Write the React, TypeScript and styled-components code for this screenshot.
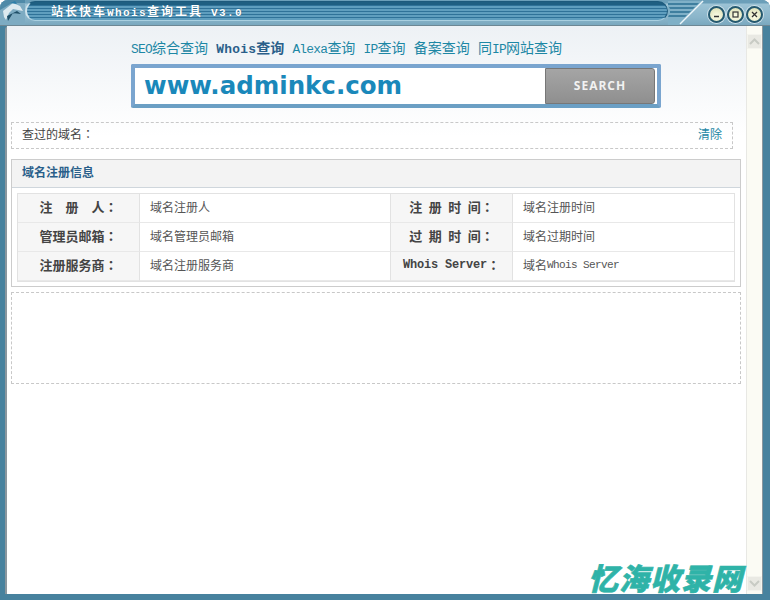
import { Fragment, type ReactNode } from "react";
import styled, { createGlobalStyle } from "styled-components";

const GlobalStyle = createGlobalStyle`
  html, body {
    margin: 0;
    padding: 0;
    background: #ffffff;
  }
`;

const cjk = `"Liberation Mono", "Noto Sans CJK SC", monospace`;

const Window = styled.div`
  width: 770px;
  height: 600px;
  overflow: hidden;
  position: relative;
  display: flex;
  flex-direction: column;
  background: #47829e;
  border-radius: 8px 8px 0 0;
  font-family: ${cjk};
`;

// the original bitmap font has tall, narrow latin: half the cjk width at nearly full height
const Latin = styled.span<{ $extra?: string }>`
  font-size: 0.92em;
  word-spacing: 0;
  letter-spacing: calc(-0.0565em + ${({ $extra }) => $extra ?? "0px"});
`;

// traditional chinese fonts centre the full width colon, like the original
const Colon = styled.span`
  font-family: "Noto Sans CJK TC", sans-serif;
`;

const TitleBar = styled.div`
  height: 26px;
  flex: none;
  display: flex;
  align-items: flex-start;
  background: linear-gradient(#6b9fb9 0 3px, #9cc3d5 4px, #8ab5ca 70%, #7aa8bf);
  border-bottom: 1px solid #6d8794;
  box-sizing: border-box;
`;

const TitleStrip = styled.div`
  flex: none;
  width: 643px;
  height: 20px;
  margin-top: 1px;
  box-sizing: border-box;
  padding-left: 24px;
  border: 1px solid #1d5a7c;
  border-bottom-color: #a9cfe0;
  border-left: 2px solid #cfe3ec;
  border-radius: 10px;
  background: linear-gradient(#1f5f82 0 3px, transparent 3px),
    repeating-linear-gradient(#2f7298 0 1px, #5f9ebe 1px 3px);
  display: flex;
  align-items: center;
`;

const TitleText = styled.span`
  font-size: 12px;
  font-weight: bold;
  letter-spacing: 2px;
  color: #ffffff;
  white-space: nowrap;
  text-shadow: 0 0 1px #1d5a7c;
`;

const TitleControls = styled.div`
  flex: 1;
  display: flex;
  align-items: flex-start;
  height: 25px;
`;

const WindowButtons = styled.div`
  margin-left: auto;
  margin-top: 6px;
  margin-right: 8px;
  display: flex;
  gap: 2px;
`;

const RoundButton = styled.div`
  width: 17px;
  height: 17px;
  box-sizing: border-box;
  border: 2px solid #25596f;
  border-radius: 50%;
  box-shadow: 0 0 0 1px #cfe1e9;
  background: radial-gradient(circle at 50% 65%, #fdfde8, #d8dcb0);
  display: flex;
  align-items: center;
  justify-content: center;
`;

const Main = styled.div`
  flex: 1;
  min-height: 0;
  display: flex;
  margin: 0 7px 6px 5px;
  background: #ffffff;
  border-left: 2px solid #8a979e;
  border-right: 1px solid #8a979e;
  border-top-left-radius: 4px;
`;

const Content = styled.div`
  flex: 1;
  min-width: 0;
  box-sizing: border-box;
  padding: 7px 4px 0 4px;
  background: linear-gradient(#edf1f5, #ffffff 110px);
`;

const NavRow = styled.nav`
  display: flex;
  gap: 8.2px;
  height: 31px;
  box-sizing: border-box;
  padding: 0 0 4px 120px;
  align-items: center;
`;

const NavLink = styled.a<{ $active?: boolean }>`
  font-size: 14px;
  color: ${({ $active }) => ($active ? "#2a5f8a" : "#1d87a5")};
  font-weight: ${({ $active }) => ($active ? "bold" : "normal")};
  white-space: nowrap;
`;

const SearchBox = styled.div`
  width: 530px;
  height: 44px;
  box-sizing: border-box;
  margin-left: 120px;
  border: 4px solid #7aa5cf;
  border-bottom-color: #6b9fc4;
  border-radius: 2px;
  background: #ffffff;
  display: flex;
  padding-right: 2px;
`;

const SearchInput = styled.div`
  flex: 1;
  padding-left: 9px;
  font-family: "DejaVu Sans", sans-serif;
  font-size: 24.5px;
  font-weight: bold;
  line-height: 36px;
  color: #1a88ba;
`;

const SearchButton = styled.div`
  width: 110px;
  box-sizing: border-box;
  border: 1px solid #777777;
  border-radius: 0 3px 3px 0;
  background: linear-gradient(#a5a5a5, #8f8f8f);
  color: #f2f2f2;
  font-family: "Open Sans", sans-serif;
  font-weight: bold;
  font-size: 12px;
  letter-spacing: 1px;
  text-align: center;
  line-height: 34px;
`;

const HistoryRow = styled.div`
  margin-top: 14px;
  width: 722px;
  height: 27px;
  box-sizing: border-box;
  border: 1px dashed #c8c8c8;
  padding: 0 10px 3px;
  display: flex;
  align-items: center;
  justify-content: space-between;
  font-size: 12px;
  color: #444444;
`;

const ClearLink = styled.a`
  color: #1d87a5;
`;

const Panel = styled.section`
  margin-top: 10px;
  width: 730px;
  height: 128px;
  box-sizing: border-box;
  border: 1px solid #cccccc;
`;

const PanelHeader = styled.div`
  height: 28px;
  box-sizing: border-box;
  padding-left: 10px;
  background: #f3f3f3;
  border-bottom: 1px solid #cfd6dc;
  font-size: 12px;
  font-weight: bold;
  line-height: 28px;
  color: #2a5f8a;
`;

const InfoTable = styled.div`
  margin: 5px 5px 0;
  border: 1px solid #e2e2e2;
  display: grid;
  grid-template-columns: 122px 251px 122px 1fr;
  grid-auto-rows: 29px;
  height: 89px;
  box-sizing: border-box;
`;

const LabelCell = styled.div`
  background: #f6f6f6;
  border-right: 1px solid #e2e2e2;
  border-bottom: 1px solid #e8e8e8;
  display: flex;
  align-items: center;
  justify-content: center;
  padding-bottom: 3px;
  font-size: 13px;
  word-spacing: -1.3px;
  font-weight: bold;
  color: #444444;
  white-space: pre;
`;

const ValueCell = styled.div`
  border-right: 1px solid #e2e2e2;
  border-bottom: 1px solid #e8e8e8;
  display: flex;
  align-items: center;
  padding: 0 0 2px 10px;
  font-size: 12px;
  color: #555555;
  white-space: pre;

  &:nth-child(4n) {
    border-right: 0;
  }
`;

const EmptyBox = styled.div`
  margin-top: 5px;
  width: 730px;
  height: 92px;
  box-sizing: border-box;
  border: 1px dashed #c8c8c8;
`;

const ScrollBar = styled.div`
  width: 16px;
  flex: none;
  background: #fbfbf4;
  border-left: 1px solid #e8e8e4;
  box-sizing: border-box;
  display: flex;
  flex-direction: column;
  justify-content: space-between;
  padding: 8px 0 3px;
`;

const ScrollArrow = styled.div`
  height: 13px;
  background: #e9e9e3;
  border: 1px solid #f4f4ee;
  display: flex;
  align-items: center;
  justify-content: center;
`;

const Watermark = styled.div`
  position: absolute;
  left: 588px;
  top: 559px;
  font-family: "Noto Sans CJK SC", sans-serif;
  font-size: 30px;
  font-weight: 900;
  font-style: italic;
  line-height: 36px;
  letter-spacing: 1px;
  color: #2fb3a8;
  -webkit-text-stroke: 0.6px #2fb3a8;
  white-space: nowrap;
`;

const Chevron = ({ up }: { up?: boolean }) => (
  <svg width="11" height="7" viewBox="0 0 11 7">
    <path
      d={up ? "M1 6 L5.5 1.5 L10 6" : "M1 1 L5.5 5.5 L10 1"}
      fill="none"
      stroke="#c8cbc4"
      strokeWidth="2"
    />
  </svg>
);

const AppIcon = () => (
  <svg width="25" height="25" viewBox="0 0 25 25" style={{ flex: "none" }}>
    <rect width="25" height="25" fill="#7dabc2" />
    <path d="M0 0 H25 V3 H12 L0 10 Z" fill="#4f8aa8" />
    <path d="M3 11 L13 3 L20 6 L23 11 L13 9 L9 13 L6 20 L4 17 Z" fill="#dce9ef" />
    <path d="M7 16 L17 11 L21 14 L13 13 L8 21 Z" fill="#1f4f68" />
    <path d="M10 3 L15 1 L17 4 Z" fill="#2d7ea8" />
  </svg>
);

const StripTail = () => (
  <svg width="40" height="25" viewBox="0 0 40 25" style={{ flex: "none" }}>
    <path d="M0 1 H36 L11.5 25 H0 Z" fill="#7fb0c7" />
    <path d="M0 3 H31 L29 5 H0 Z M1 7 H27 L25 9 H2 Z M2 11 H23 L21 13 H2 Z M1 15 H19 L17 17 H0 Z" fill="#3f7f9f" />
    <path d="M35 1 L12 24" stroke="#eef6f9" strokeWidth="1.5" fill="none" />
  </svg>
);

const rows: ReactNode[][] = [
  [<>注  册  人<Colon>：</Colon></>, "域名注册人", <>注 册 时 间<Colon>：</Colon></>, "域名注册时间"],
  [<>管理员邮箱<Colon>：</Colon></>, "域名管理员邮箱", <>过 期 时 间<Colon>：</Colon></>, "域名过期时间"],
  [
    <>注册服务商<Colon>：</Colon></>,
    "域名注册服务商",
    <>
      <Latin $extra="0.5px">Whois Server</Latin>
      <Colon>：</Colon>
    </>,
    <>
      域名<Latin>Whois Server</Latin>
    </>,
  ],
];

export default function App() {
  return (
    <>
      <GlobalStyle />
      <Window>
        <TitleBar>
          <AppIcon />
          <TitleStrip>
            <TitleText>
              站长快车<Latin $extra="2px">Whois</Latin>查询工具<Latin $extra="2px"> V3.0</Latin>
            </TitleText>
          </TitleStrip>
          <TitleControls>
            <StripTail />
            <WindowButtons>
              <RoundButton>
                <svg width="7" height="7" viewBox="0 0 7 7">
                  <path d="M1 5.5 H6" stroke="#333" strokeWidth="1.5" />
                </svg>
              </RoundButton>
              <RoundButton>
                <svg width="7" height="7" viewBox="0 0 7 7">
                  <rect x="1" y="1" width="5" height="5" fill="none" stroke="#333" strokeWidth="1.2" />
                </svg>
              </RoundButton>
              <RoundButton>
                <svg width="7" height="7" viewBox="0 0 7 7">
                  <path d="M1 1 L6 6 M6 1 L1 6" stroke="#333" strokeWidth="1.3" />
                </svg>
              </RoundButton>
            </WindowButtons>
          </TitleControls>
        </TitleBar>
        <Main>
          <Content>
            <NavRow>
              <NavLink>
                <Latin>SEO</Latin>综合查询
              </NavLink>
              <NavLink $active>
                <Latin $extra="1px">Whois</Latin>查询
              </NavLink>
              <NavLink>
                <Latin>Alexa</Latin>查询
              </NavLink>
              <NavLink>
                <Latin>IP</Latin>查询
              </NavLink>
              <NavLink>备案查询</NavLink>
              <NavLink>
                同<Latin>IP</Latin>网站查询
              </NavLink>
            </NavRow>
            <SearchBox>
              <SearchInput>www.adminkc.com</SearchInput>
              <SearchButton>SEARCH</SearchButton>
            </SearchBox>
            <HistoryRow>
              <span>
                查过的域名<Colon>：</Colon>
              </span>
              <ClearLink>清除</ClearLink>
            </HistoryRow>
            <Panel>
              <PanelHeader>域名注册信息</PanelHeader>
              <InfoTable>
                {rows.map((row, index) => (
                  <Fragment key={index}>
                    <LabelCell>{row[0]}</LabelCell>
                    <ValueCell>{row[1]}</ValueCell>
                    <LabelCell>{row[2]}</LabelCell>
                    <ValueCell>{row[3]}</ValueCell>
                  </Fragment>
                ))}
              </InfoTable>
            </Panel>
            <EmptyBox />
          </Content>
          <ScrollBar>
            <ScrollArrow>
              <Chevron up />
            </ScrollArrow>
            <ScrollArrow>
              <Chevron />
            </ScrollArrow>
          </ScrollBar>
        </Main>
        <Watermark>忆海收录网</Watermark>
      </Window>
    </>
  );
}
